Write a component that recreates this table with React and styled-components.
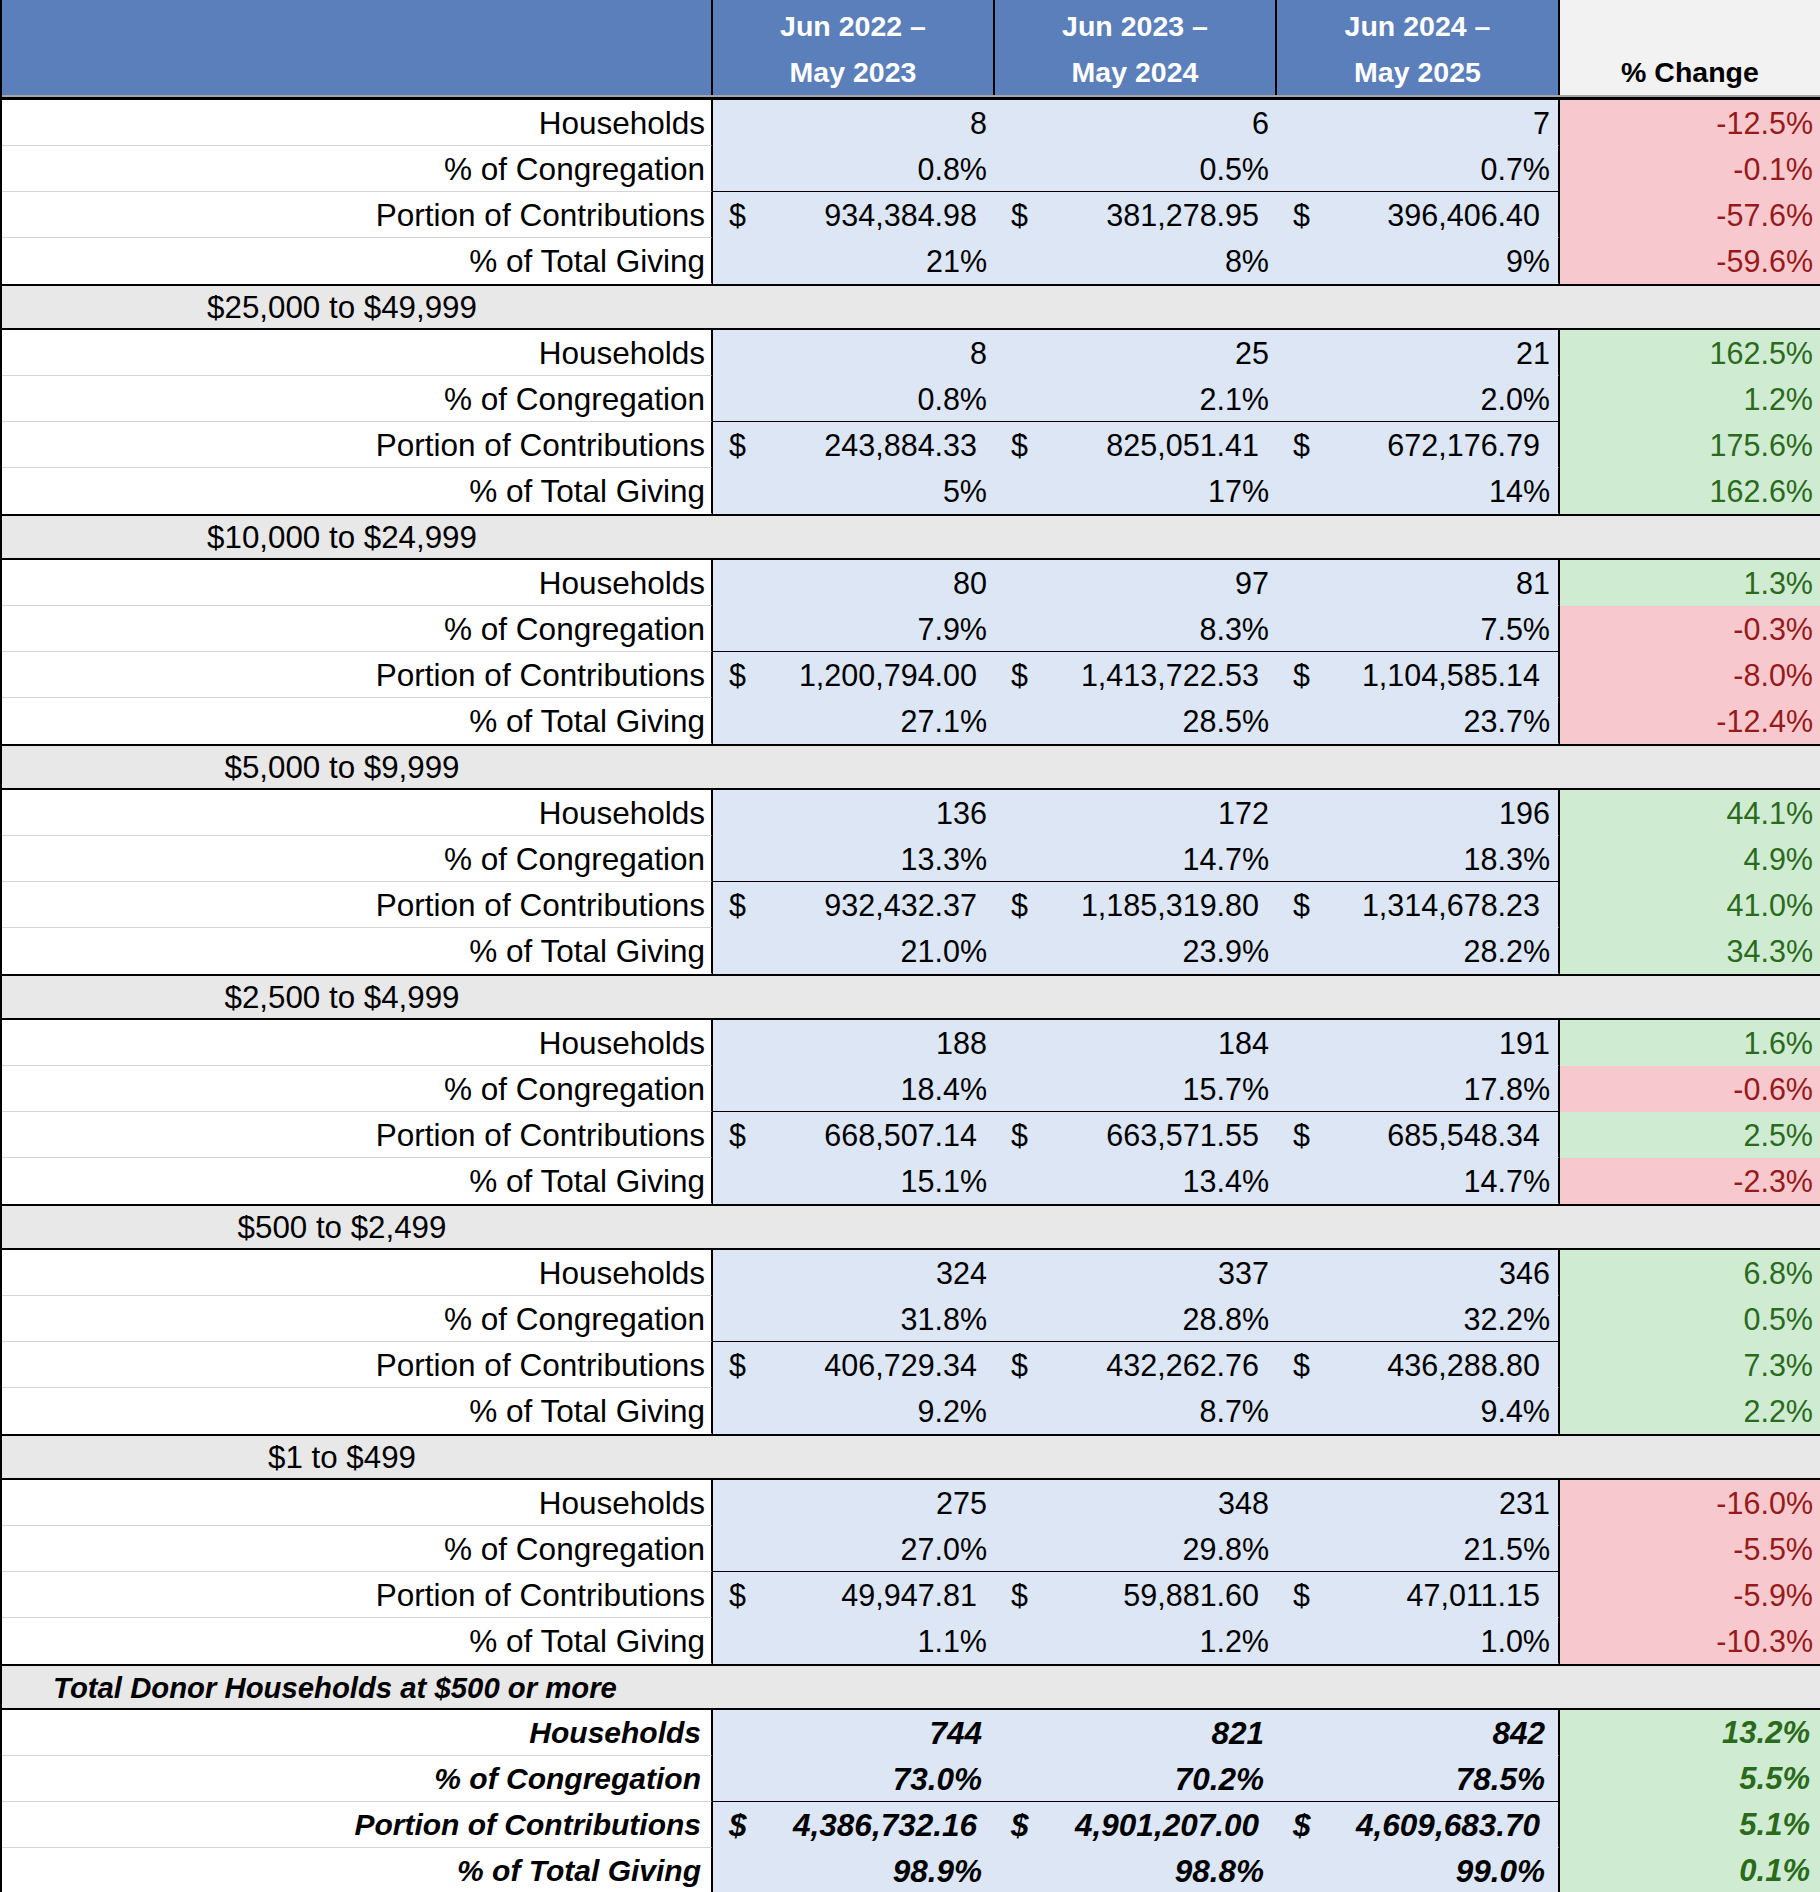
import React from 'react';
import styled, { createGlobalStyle } from 'styled-components';

const FONT = `"Liberation Sans", Arial, sans-serif`;

const GlobalStyle = createGlobalStyle`
  *, *::before, *::after { box-sizing: border-box; }
  html, body { margin: 0; padding: 0; background: #ffffff; }
  body { font-family: ${FONT}; color: #000; }
`;

const COLS = '711px 282px 282px 283px 260px';

const Sheet = styled.div`
  width: 1820px;
  border-left: 2px solid #000;
  display: flex;
  flex-direction: column;
  font-size: 30.5px;
`;

const HeaderRow = styled.div`
  display: grid;
  grid-template-columns: ${COLS};
  height: 97px;
  border-bottom: 3px solid #a6a6a6;
`;

const HeadCell = styled.div`
  background: ${(p) => (p.$muted ? '#f2f2f2' : '#5b7fba')};
  color: ${(p) => (p.$muted ? '#000' : '#fff')};
  border-right: ${(p) => (p.$muted ? 'none' : '2px solid #000')};
  font-weight: 700;
  font-size: 28.5px;
  text-align: center;
  line-height: 46px;
  display: flex;
  flex-direction: column;
  padding-top: 3px;
  white-space: nowrap;
`;

const HeadLine = styled.span`
  display: block;
  height: 46px;
`;

const Body = styled.div`
  border-top: 3px solid #000;
  display: flex;
  flex-direction: column;
`;

const GroupRow = styled.div`
  height: 46px;
  background: #e8e8e8;
  border-top: 2px solid #000;
  border-bottom: 2px solid #000;
  display: flex;
  align-items: center;
`;

const GroupTitle = styled.div`
  width: 680px;
  text-align: center;
  line-height: 42px;
  padding-top: 1px;
  padding-right: ${(p) => (p.$strong ? 14 : 0)}px;
  white-space: nowrap;
  font-size: ${(p) => (p.$strong ? 29.3 : 31.3)}px;
  font-weight: ${(p) => (p.$strong ? 700 : 400)};
  font-style: ${(p) => (p.$strong ? 'italic' : 'normal')};
`;

const DataRow = styled.div`
  display: grid;
  grid-template-columns: ${COLS};
  height: 46px;
  line-height: 44px;
  font-weight: ${(p) => (p.$strong ? 700 : 400)};
  font-style: ${(p) => (p.$strong ? 'italic' : 'normal')};
`;

const LabelCell = styled.div`
  background: #fff;
  border-right: 2px solid #000;
  border-bottom: 2px solid ${(p) => (p.$last ? '#fff' : '#d4d4d4')};
  text-align: right;
  font-size: ${(p) => (p.$strong ? 30 : 31.5)}px;
  padding-top: 1px;
  padding-right: ${(p) => (p.$strong ? 10 : 6)}px;
  white-space: nowrap;
`;

const ValueCell = styled.div`
  background: #dce6f4;
  border-bottom: 2px solid ${(p) => (p.$rule ? '#000' : '#dce6f4')};
  border-right: ${(p) => (p.$edge ? '2px solid #000' : 'none')};
  display: flex;
  justify-content: ${(p) => (p.$money ? 'space-between' : 'flex-end')};
  font-size: ${(p) => (p.$strong ? 31.5 : 30.5)}px;
  padding-top: 1px;
  padding-left: 16px;
  padding-right: ${(p) => (p.$money ? 18 : p.$strong ? 13 : 8)}px;
  white-space: nowrap;
`;

const ChangeCell = styled.div`
  background: ${(p) => (p.$up ? '#cfecd3' : '#f7c9ce')};
  color: ${(p) => (p.$up ? '#2a6a1b' : '#971a1a')};
  border-bottom: 2px solid ${(p) => (p.$up ? '#cfecd3' : '#f7c9ce')};
  text-align: right;
  font-size: ${(p) => (p.$strong ? 31 : 30.5)}px;
  padding-top: 1px;
  padding-right: ${(p) => (p.$strong ? 10 : 7)}px;
  white-space: nowrap;
`;

const LABELS = ['Households', '% of Congregation', 'Portion of Contributions', '% of Total Giving'];

const GROUPS = [
  {
    title: null,
    rows: [
      [['8', '6', '7'], '-12.5%'],
      [['0.8%', '0.5%', '0.7%'], '-0.1%'],
      [['934,384.98', '381,278.95', '396,406.40'], '-57.6%'],
      [['21%', '8%', '9%'], '-59.6%'],
    ],
  },
  {
    title: '$25,000 to $49,999',
    rows: [
      [['8', '25', '21'], '162.5%'],
      [['0.8%', '2.1%', '2.0%'], '1.2%'],
      [['243,884.33', '825,051.41', '672,176.79'], '175.6%'],
      [['5%', '17%', '14%'], '162.6%'],
    ],
  },
  {
    title: '$10,000 to $24,999',
    rows: [
      [['80', '97', '81'], '1.3%'],
      [['7.9%', '8.3%', '7.5%'], '-0.3%'],
      [['1,200,794.00', '1,413,722.53', '1,104,585.14'], '-8.0%'],
      [['27.1%', '28.5%', '23.7%'], '-12.4%'],
    ],
  },
  {
    title: '$5,000 to $9,999',
    rows: [
      [['136', '172', '196'], '44.1%'],
      [['13.3%', '14.7%', '18.3%'], '4.9%'],
      [['932,432.37', '1,185,319.80', '1,314,678.23'], '41.0%'],
      [['21.0%', '23.9%', '28.2%'], '34.3%'],
    ],
  },
  {
    title: '$2,500 to $4,999',
    rows: [
      [['188', '184', '191'], '1.6%'],
      [['18.4%', '15.7%', '17.8%'], '-0.6%'],
      [['668,507.14', '663,571.55', '685,548.34'], '2.5%'],
      [['15.1%', '13.4%', '14.7%'], '-2.3%'],
    ],
  },
  {
    title: '$500 to $2,499',
    rows: [
      [['324', '337', '346'], '6.8%'],
      [['31.8%', '28.8%', '32.2%'], '0.5%'],
      [['406,729.34', '432,262.76', '436,288.80'], '7.3%'],
      [['9.2%', '8.7%', '9.4%'], '2.2%'],
    ],
  },
  {
    title: '$1 to $499',
    rows: [
      [['275', '348', '231'], '-16.0%'],
      [['27.0%', '29.8%', '21.5%'], '-5.5%'],
      [['49,947.81', '59,881.60', '47,011.15'], '-5.9%'],
      [['1.1%', '1.2%', '1.0%'], '-10.3%'],
    ],
  },
  {
    title: 'Total Donor Households at $500 or more',
    strong: true,
    rows: [
      [['744', '821', '842'], '13.2%'],
      [['73.0%', '70.2%', '78.5%'], '5.5%'],
      [['4,386,732.16', '4,901,207.00', '4,609,683.70'], '5.1%'],
      [['98.9%', '98.8%', '99.0%'], '0.1%'],
    ],
  },
];

const PERIODS = [
  ['Jun 2022 –', 'May 2023'],
  ['Jun 2023 –', 'May 2024'],
  ['Jun 2024 –', 'May 2025'],
];

function Block({ group }) {
  const strong = !!group.strong;
  return (
    <>
      {group.title && (
        <GroupRow>
          <GroupTitle $strong={strong}>{group.title}</GroupTitle>
        </GroupRow>
      )}
      {group.rows.map(([vals, change], i) => {
        const money = i === 2;
        const rule = i === 1;
        return (
          <DataRow key={i} $strong={strong}>
            <LabelCell $last={i === 3} $strong={strong}>{LABELS[i]}</LabelCell>
            {vals.map((v, j) => (
              <ValueCell key={j} $money={money} $rule={rule} $edge={j === 2} $strong={strong}>
                {money && <span>$</span>}
                <span>{v}</span>
              </ValueCell>
            ))}
            <ChangeCell $up={!change.startsWith('-')} $strong={strong}>{change}</ChangeCell>
          </DataRow>
        );
      })}
    </>
  );
}

export default function App() {
  return (
    <>
      <GlobalStyle />
      <Sheet>
        <HeaderRow>
          <HeadCell />
          {PERIODS.map(([a, b]) => (
            <HeadCell key={a}>
              <HeadLine>{a}</HeadLine>
              <HeadLine>{b}</HeadLine>
            </HeadCell>
          ))}
          <HeadCell $muted>
            <HeadLine />
            <HeadLine>% Change</HeadLine>
          </HeadCell>
        </HeaderRow>
        <Body>
          {GROUPS.map((g, i) => (
            <Block key={i} group={g} />
          ))}
        </Body>
      </Sheet>
    </>
  );
}
